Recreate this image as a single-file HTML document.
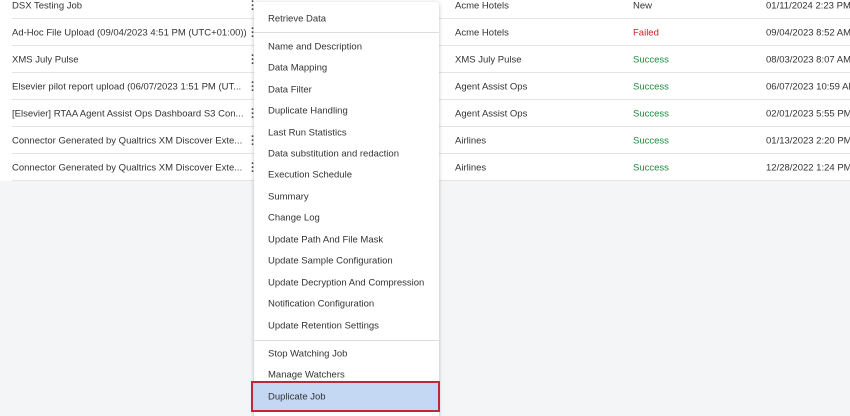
<!DOCTYPE html><html><head><style>
html,body{margin:0;width:850px;height:416px;overflow:hidden}
body{background:#f4f5f7;font-family:"Liberation Sans",sans-serif;font-size:9.5px;color:#333;position:relative}
.tbl{position:absolute;left:0;top:0;width:850px;height:181px;background:#fff}
.row{position:absolute;left:0;width:850px;height:27px;}
.row .l{position:absolute;left:12px;right:0;bottom:0;border-bottom:1px solid #e4e4e4;height:27px}
.row span{position:absolute;top:50%;transform:translateY(-50%);white-space:nowrap}
.dots{position:absolute;left:251px;font-weight:bold;font-size:11px;line-height:4px;color:#444;z-index:3}
.menu{position:absolute;left:254px;top:2px;width:185px;height:420px;background:#fff;box-shadow:0 1px 4px rgba(0,0,0,.25);border-radius:3px}
.mi{position:absolute;left:14px;white-space:nowrap;transform:translateY(-50%)}
.sep{position:absolute;left:0;right:0;height:1px;background:#ddd}
.hl{position:absolute;background:#c5d8f3;border:2px solid #c0283a;box-sizing:border-box;left:-3px;width:189px;top:379px;height:31px}
.g{color:#1e8a3b}.r{color:#cc1f25}
</style></head><body>
<div class="tbl">
<div class="row" style="top:-8px"><div class="l"></div><span style="left:12px">DSX Testing Job</span><span style="left:455px">Acme Hotels</span><span style="left:633px">New</span><span style="left:766px">01/11/2024 2:23 PM</span></div>
<div class="row" style="top:19px"><div class="l"></div><span style="left:12px">Ad-Hoc File Upload (09/04/2023 4:51 PM (UTC+01:00))</span><span style="left:455px">Acme Hotels</span><span class="r" style="left:633px">Failed</span><span style="left:766px">09/04/2023 8:52 AM</span></div>
<div class="row" style="top:46px"><div class="l"></div><span style="left:12px">XMS July Pulse</span><span style="left:455px">XMS July Pulse</span><span class="g" style="left:633px">Success</span><span style="left:766px">08/03/2023 8:07 AM</span></div>
<div class="row" style="top:73px"><div class="l"></div><span style="left:12px">Elsevier pilot report upload (06/07/2023 1:51 PM (UT...</span><span style="left:455px">Agent Assist Ops</span><span class="g" style="left:633px">Success</span><span style="left:766px">06/07/2023 10:59 AM</span></div>
<div class="row" style="top:100px"><div class="l"></div><span style="left:12px">[Elsevier] RTAA Agent Assist Ops Dashboard S3 Con...</span><span style="left:455px">Agent Assist Ops</span><span class="g" style="left:633px">Success</span><span style="left:766px">02/01/2023 5:55 PM</span></div>
<div class="row" style="top:127px"><div class="l"></div><span style="left:12px">Connector Generated by Qualtrics XM Discover Exte...</span><span style="left:455px">Airlines</span><span class="g" style="left:633px">Success</span><span style="left:766px">01/13/2023 2:20 PM</span></div>
<div class="row" style="top:154px"><div class="l"></div><span style="left:12px">Connector Generated by Qualtrics XM Discover Exte...</span><span style="left:455px">Airlines</span><span class="g" style="left:633px">Success</span><span style="left:766px">12/28/2022 1:24 PM</span></div>
</div>
<div class="dots" style="top:0px">·<br>·<br>·</div>
<div class="dots" style="top:27px">·<br>·<br>·</div>
<div class="dots" style="top:54px">·<br>·<br>·</div>
<div class="dots" style="top:81px">·<br>·<br>·</div>
<div class="dots" style="top:108px">·<br>·<br>·</div>
<div class="dots" style="top:135px">·<br>·<br>·</div>
<div class="dots" style="top:162px">·<br>·<br>·</div>
<div class="menu">
<div class="mi" style="top:17px">Retrieve Data</div>
<div class="sep" style="top:30px"></div>
<div class="mi" style="top:45px">Name and Description</div>
<div class="mi" style="top:66px">Data Mapping</div>
<div class="mi" style="top:88px">Data Filter</div>
<div class="mi" style="top:109px">Duplicate Handling</div>
<div class="mi" style="top:131px">Last Run Statistics</div>
<div class="mi" style="top:152px">Data substitution and redaction</div>
<div class="mi" style="top:173px">Execution Schedule</div>
<div class="mi" style="top:195px">Summary</div>
<div class="mi" style="top:216px">Change Log</div>
<div class="mi" style="top:238px">Update Path And File Mask</div>
<div class="mi" style="top:259px">Update Sample Configuration</div>
<div class="mi" style="top:281px">Update Decryption And Compression</div>
<div class="mi" style="top:302px">Notification Configuration</div>
<div class="mi" style="top:324px">Update Retention Settings</div>
<div class="sep" style="top:338px"></div>
<div class="mi" style="top:352px">Stop Watching Job</div>
<div class="mi" style="top:373px">Manage Watchers</div>
<div class="hl"></div>
<div class="mi" style="top:395px">Duplicate Job</div>
</div>
</body></html>
